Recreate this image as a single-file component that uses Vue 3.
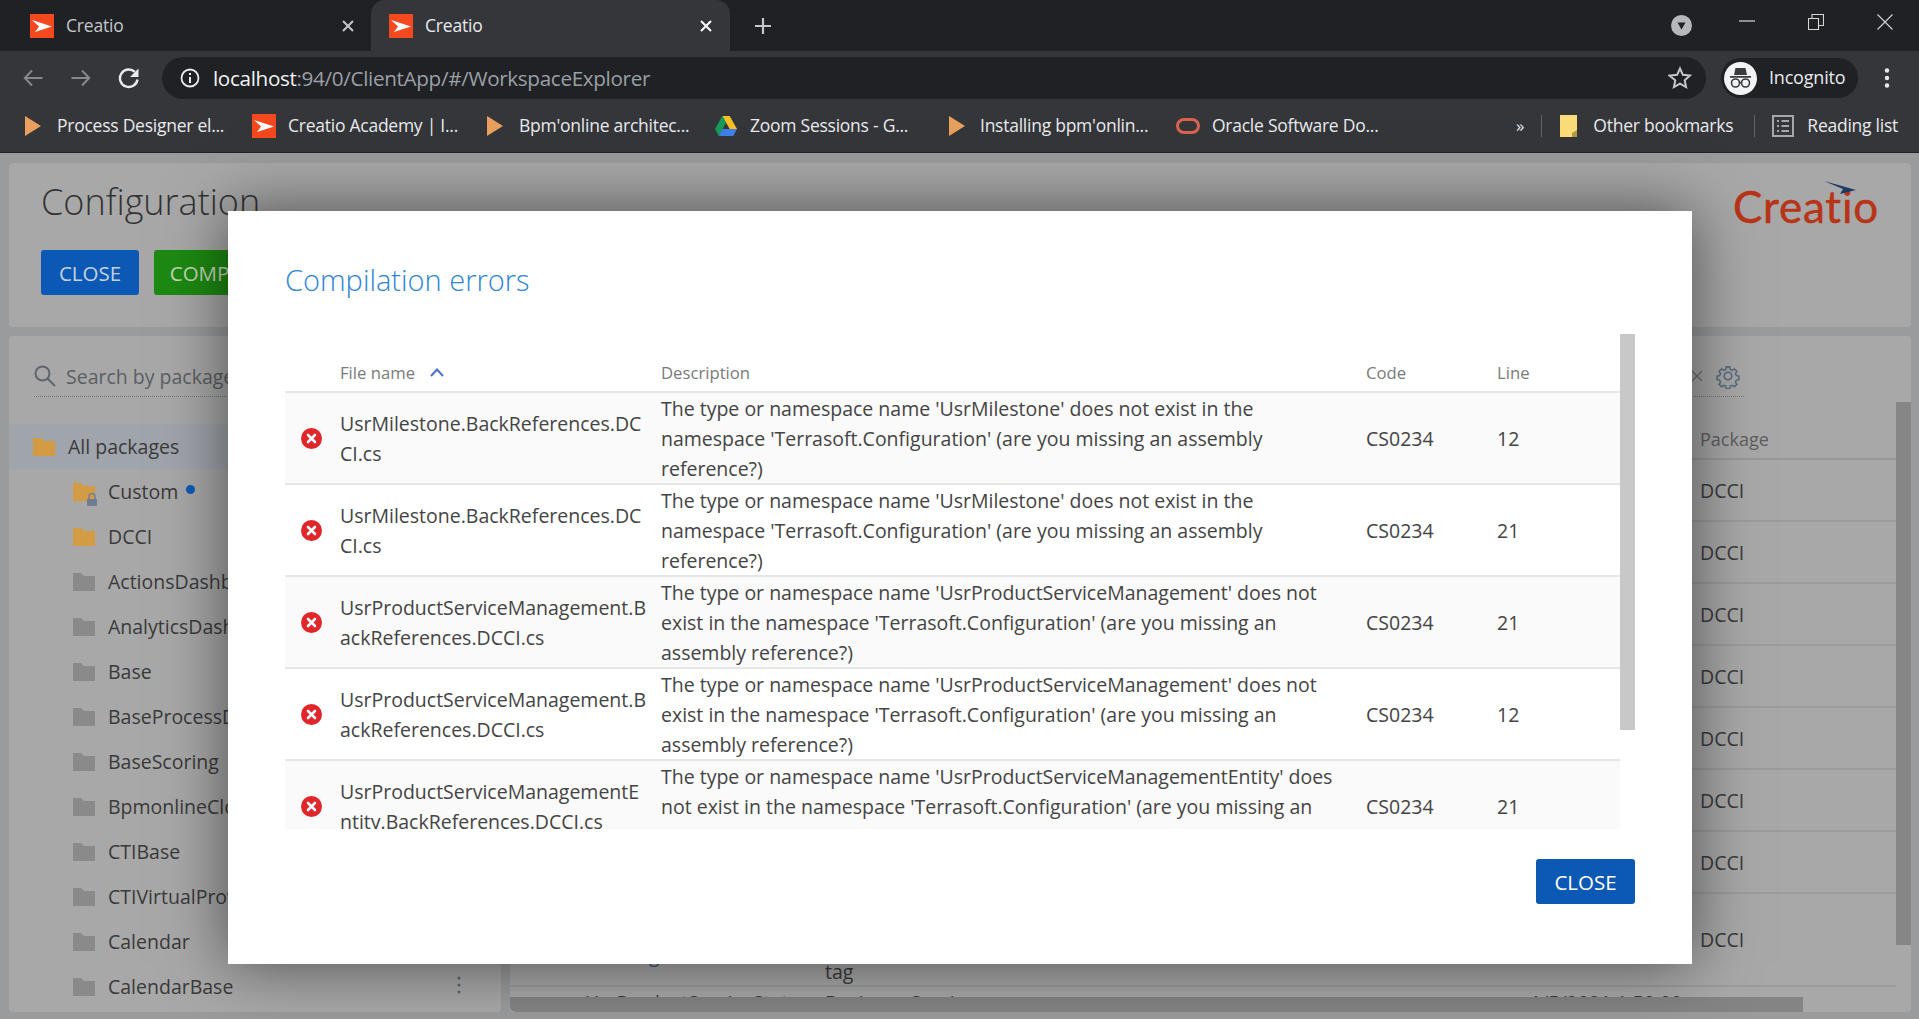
<script setup>
const errors = [
  { file: 'UsrMilestone.BackReferences.DC\nCI.cs', desc: "The type or namespace name 'UsrMilestone' does not exist in the\nnamespace 'Terrasoft.Configuration' (are you missing an assembly\nreference?)", line: 12 },
  { file: 'UsrMilestone.BackReferences.DC\nCI.cs', desc: "The type or namespace name 'UsrMilestone' does not exist in the\nnamespace 'Terrasoft.Configuration' (are you missing an assembly\nreference?)", line: 21 },
  { file: 'UsrProductServiceManagement.B\nackReferences.DCCI.cs', desc: "The type or namespace name 'UsrProductServiceManagement' does not\nexist in the namespace 'Terrasoft.Configuration' (are you missing an\nassembly reference?)", line: 21 },
  { file: 'UsrProductServiceManagement.B\nackReferences.DCCI.cs', desc: "The type or namespace name 'UsrProductServiceManagement' does not\nexist in the namespace 'Terrasoft.Configuration' (are you missing an\nassembly reference?)", line: 12 },
  { file: 'UsrProductServiceManagementE\nntity.BackReferences.DCCI.cs', desc: "The type or namespace name 'UsrProductServiceManagementEntity' does\nnot exist in the namespace 'Terrasoft.Configuration' (are you missing an\nassembly reference?)", line: 21 }
]
const packages = ['ActionsDashboard', 'AnalyticsDashboard', 'Base', 'BaseProcessDesigner', 'BaseScoring', 'BpmonlineCloud', 'CTIBase', 'CTIVirtualProvider', 'Calendar', 'CalendarBase']
const rows = [1, 2, 3, 4, 5, 6, 7]
</script>

<template>
  <div class="screen">
    <header class="chrome">
      <div class="tabstrip">
        <div class="tab first">
          <svg class="fav" viewBox="0 0 24 24"><rect width="24" height="24" fill="#f4481f"/><path d="M2 6l20 6.5L5 18l4-5.500z" fill="#fff"/></svg>
          <span class="tab-title dimmed">Creatio</span>
          <svg class="tab-x" viewBox="0 0 12 12"><path d="M1 1l10 10M11 1L1 11" stroke="#c4c6ca" stroke-width="2"/></svg>
        </div>
        <div class="tab active">
          <svg class="fav" viewBox="0 0 24 24"><rect width="24" height="24" fill="#f4481f"/><path d="M2 6l20 6.5L5 18l4-5.500z" fill="#fff"/></svg>
          <span class="tab-title">Creatio</span>
          <svg class="tab-x" viewBox="0 0 12 12"><path d="M1 1l10 10M11 1L1 11" stroke="#fff" stroke-width="2"/></svg>
        </div>
        <svg class="plus" viewBox="0 0 18 18"><path d="M9 1v16M1 9h16" stroke="#c4c6ca" stroke-width="2.200"/></svg>
        <div class="spacer"></div>
        <svg class="media" viewBox="0 0 21 21"><circle cx="10.500" cy="10.500" r="10.500" fill="#b5b7bb"/><path d="M6.500 7.500h8l-4 7z" fill="#202124"/></svg>
        <svg class="win min" viewBox="0 0 16 16"><path d="M0 8h16" stroke="#d6d6d6" stroke-width="1.200"/></svg>
        <svg class="win res" viewBox="0 0 16 16"><path d="M.5 4.500h10v11H.5zM4 4.500V.5h11.500v11H10.500" fill="none" stroke="#d6d6d6" stroke-width="1.100"/></svg>
        <svg class="win cls" viewBox="0 0 16 16"><path d="M.5.5l15 15M15.500.5l-15 15" stroke="#d6d6d6" stroke-width="1.100"/></svg>
      </div>
      <div class="toolbar">
        <svg class="nav back" viewBox="0 0 20 20"><path d="M19.500 10H2M9 2.500L1.800 10 9 17.500" fill="none" stroke="#85888c" stroke-width="2"/></svg>
        <svg class="nav fwd" viewBox="0 0 20 20"><path d="M.5 10H18M11 2.500l7.200 7.500-7.200 7.500" fill="none" stroke="#85888c" stroke-width="2"/></svg>
        <svg class="nav reload" viewBox="0 0 22 22"><path d="M19.500 12.500a8.800 8.800 0 1 1-2.600-7.600" fill="none" stroke="#e8eaed" stroke-width="2.400"/><path d="M20.500 1.500v8.500H12z" fill="#e8eaed"/></svg>
        <div class="omnibox">
          <svg class="info" viewBox="0 0 20 20"><circle cx="10" cy="10" r="8.500" fill="none" stroke="#e8eaed" stroke-width="1.800"/><path d="M10 9v6M10 5v2" stroke="#e8eaed" stroke-width="2"/></svg>
          <span class="url"><b>localhost</b>:94/0/ClientApp/#/WorkspaceExplorer</span>
          <svg class="star" viewBox="0 0 24 24"><path d="M12 2.500l2.900 6.300 6.900.8-5.100 4.700 1.400 6.800-6.100-3.400-6.100 3.400 1.400-6.800L1.400 9.600l7.700-.8z" fill="none" stroke="#c4c6ca" stroke-width="2"/></svg>
        </div>
        <div class="profile">
          <span class="avatar">
            <svg viewBox="0 0 33 33"><path d="M10 13l1.500-7h10l1.500 7zM6 14h21v1.800H6z" fill="#3a3b3f"/><circle cx="11.500" cy="21" r="4" fill="none" stroke="#3a3b3f" stroke-width="1.600"/><circle cx="21.500" cy="21" r="4" fill="none" stroke="#3a3b3f" stroke-width="1.600"/><path d="M15.500 20.500h2" stroke="#3a3b3f" stroke-width="1.400"/></svg>
          </span>
          <span class="profile-name">Incognito</span>
        </div>
        <svg class="kebab" viewBox="0 0 6 20"><circle cx="3" cy="2.500" r="2.200" fill="#e8eaed"/><circle cx="3" cy="10" r="2.200" fill="#e8eaed"/><circle cx="3" cy="17.500" r="2.200" fill="#e8eaed"/></svg>
      </div>
      <div class="bookmarks">
        <svg class="bm-tri" viewBox="0 0 16 20"><path d="M0 0l16 10L0 20z" fill="#e9a05e"/></svg>
        <span class="bm w167">Process Designer el...</span>
        <svg class="fav bm-fav" viewBox="0 0 24 24"><rect width="24" height="24" fill="#f4481f"/><path d="M2 6l20 6.500L5 18l4-5.500z" fill="#fff"/></svg>
        <span class="bm w168">Creatio Academy | I...</span>
        <svg class="bm-tri third" viewBox="0 0 16 20"><path d="M0 0l16 10L0 20z" fill="#e9a05e"/></svg>
        <span class="bm w170">Bpm'online architec...</span>
        <svg class="drive" viewBox="0 0 22 20"><path d="M7.300 0h7.400L22 13h-7.300z" fill="#f6c026"/><path d="M7.300 0L0 13l3.700 7L11 7z" fill="#169c58"/><path d="M3.700 20H18.300L22 13H7.400z" fill="#3f7fe6"/></svg>
        <span class="bm w162">Zoom Sessions - G...</span>
        <svg class="bm-tri fourth" viewBox="0 0 16 20"><path d="M0 0l16 10L0 20z" fill="#e9a05e"/></svg>
        <span class="bm w172">Installing bpm'onlin...</span>
        <svg class="oracle" viewBox="0 0 24 16"><rect x="1.500" y="1.500" width="21" height="13" rx="6.500" fill="none" stroke="#d9634f" stroke-width="3"/></svg>
        <span class="bm w167">Oracle Software Do...</span>
        <div class="spacer"></div>
        <span class="more">»</span>
        <i class="sep"></i>
        <svg class="bm-folder" viewBox="0 0 17 22"><path d="M0 0h17v22H0z" fill="#fbdc78"/><path d="M17 15v7h-5v-4z" fill="#b59a45"/></svg>
        <span class="bm other">Other bookmarks</span>
        <i class="sep"></i>
        <svg class="reading" viewBox="0 0 22 22"><rect x="1" y="1" width="20" height="20" fill="none" stroke="#a5a7ab" stroke-width="2"/><path d="M5 6h2M5 11h2M5 16h2M9.500 6H17M9.500 11H17M9.500 16H17" stroke="#a5a7ab" stroke-width="2"/></svg>
        <span class="bm">Reading list</span>
      </div>
    </header>

    <main class="page">
      <section class="card head-card">
        <div>
          <h1 class="page-title">Configuration</h1>
          <div class="actions">
            <button class="btn blue">CLOSE</button>
            <button class="btn green">COMPILE</button>
          </div>
        </div>
        <div class="logo">
          <svg class="logo-arrow" viewBox="0 0 33 14"><path d="M0 0l32 9-16 4 3-5z" fill="#1b3a66"/></svg>
          <span>Creatio</span>
        </div>
      </section>

      <div class="panels">
        <aside class="card side">
          <div class="search">
            <svg class="search-ic" viewBox="0 0 22 22"><circle cx="8.500" cy="8.500" r="7" fill="none" stroke="#5d6570" stroke-width="2"/><path d="M13.500 13.500l7.500 7.500" stroke="#5d6570" stroke-width="2"/></svg>
            <span class="search-text">Search by package</span>
          </div>
          <div class="tree-item all">
            <svg class="folder" viewBox="0 0 22 18"><path d="M0 0h8l3 3h11v15H0z" fill="#d49b45"/></svg>
            <span>All packages</span>
          </div>
          <div class="tree-item nested">
            <span class="folder-wrap">
              <svg class="folder" viewBox="0 0 22 18"><path d="M0 0h8l3 3h11v15H0z" fill="#d49b45"/></svg>
              <svg class="lock" viewBox="0 0 10 13"><path d="M2 6V3.500a3 3 0 0 1 6 0V6" fill="none" stroke="#6e7c96" stroke-width="1.500"/><rect y="6" width="10" height="7" rx="1" fill="#6e7c96"/></svg>
            </span>
            <span>Custom</span><i class="dot"></i>
          </div>
          <div class="tree-item nested">
            <svg class="folder" viewBox="0 0 22 18"><path d="M0 0h8l3 3h11v15H0z" fill="#d49b45"/></svg>
            <span>DCCI</span>
          </div>
          <div v-for="p in packages" :key="p" class="tree-item nested">
            <svg class="folder" viewBox="0 0 22 18"><path d="M0 0h8l3 3h11v15H0z" fill="#8a8a8a"/></svg>
            <span>{{ p }}</span>
          </div>
          <svg class="side-dots" viewBox="0 0 4 18"><circle cx="2" cy="2" r="1.600" fill="#5d6a78"/><circle cx="2" cy="9" r="1.600" fill="#5d6a78"/><circle cx="2" cy="16" r="1.600" fill="#5d6a78"/></svg>
        </aside>

        <section class="card content">
          <div class="filter">
            <svg class="filter-x" viewBox="0 0 12 12"><path d="M1 1l10 10M11 1L1 11" stroke="#6b6f75" stroke-width="1.200"/></svg>
            <svg class="gear" viewBox="0 0 24 24"><path d="M10 1.500h4l.6 3 2.300 1 2.600-1.700 2.800 2.800-1.700 2.600 1 2.300 3 .6v4l-3 .6-1 2.300 1.700 2.600-2.800 2.800-2.600-1.700-2.300 1-.6 3h-4l-.6-3-2.300-1-2.600 1.700-2.800-2.800 1.700-2.600-1-2.300-3-.6v-4l3-.6 1-2.300L1.700 6.600l2.800-2.800 2.600 1.700 2.300-1z" transform="translate(2.400 2.400) scale(.8)" fill="none" stroke="#5a6b80" stroke-width="1.800"/><circle cx="12" cy="12" r="3.500" fill="none" stroke="#5a6b80" stroke-width="1.500"/></svg>
          </div>
          <div class="grid-head"><span>Package</span></div>
          <div v-for="r in rows" :key="r" class="grid-row"><span>DCCI</span></div>
          <div class="grid-row tall">
            <span class="link">UsrCaseMilestone<br>UsrTag</span>
            <span class="tag">Related<br>tag</span>
            <span>DCCI</span>
          </div>
          <div class="peek">
            <span class="peek-name">UsrProductServiceStatus</span>
            <span class="peek-type">Business Service</span>
            <span class="peek-date">1/5/2021 1:50:00</span>
          </div>
          <div class="vbar"></div>
          <div class="hbar"></div>
        </section>
      </div>
    </main>

    <div class="modal">
      <h2 class="modal-title">Compilation errors</h2>
      <div class="table-area">
        <div class="table">
          <div class="t-head">
            <span class="c-icon"></span>
            <span class="c-name">File name <svg class="sort" viewBox="0 0 14 9"><path d="M1 8l6-6.500L13 8" fill="none" stroke="#4a73c8" stroke-width="2"/></svg></span>
            <span class="c-desc">Description</span>
            <span class="c-code">Code</span>
            <span class="c-line">Line</span>
          </div>
          <div v-for="(e, i) in errors" :key="i" class="t-row">
            <span class="c-icon">
              <svg class="err" viewBox="0 0 21 21"><circle cx="10.500" cy="10.500" r="10.500" fill="#e0252b"/><path d="M7 7l7 7M14 7l-7 7" stroke="#fff" stroke-width="2.600" stroke-linecap="round"/></svg>
            </span>
            <span class="c-name wrap">{{ e.file }}</span>
            <span class="c-desc wrap">{{ e.desc }}</span>
            <span class="c-code">CS0234</span>
            <span class="c-line">{{ e.line }}</span>
          </div>
        </div>
        <div class="track"><div class="thumb"></div></div>
      </div>
      <div class="modal-foot">
        <button class="btn blue">CLOSE</button>
      </div>
    </div>
  </div>
</template>

<style scoped>
.screen { position: relative; width: 1919px; height: 1019px; overflow: hidden; background: #9a9b9c; font-family: "Open Sans", sans-serif; }
.chrome { height: 153px; background: #35363a; border-bottom: 1px solid #222; box-sizing: border-box; color: #e8eaed; font-family: "Open Sans", sans-serif; }
.spacer { flex: 1; }
.tabstrip { height: 51px; background: #202124; display: flex; align-items: center; }
.tab { height: 51px; display: flex; align-items: center; box-sizing: border-box; }
.tab.first { width: 371px; padding-left: 30px; }
.tab.active { width: 359px; padding-left: 18px; background: #35363a; border-radius: 14px 14px 0 0; }
.fav { width: 24px; height: 24px; flex: none; }
.tab-title { margin-left: 12px; font-size: 17.500px; width: 275px; letter-spacing: -.2px; margin-top: -2px; }
.tab.first .tab-title { width: 276px; }
.tab-title.dimmed { color: #c4c6ca; }
.tab-x { width: 12px; height: 12px; }
.plus { width: 18px; height: 18px; margin-left: 24px; }
.media { width: 21px; height: 21px; margin-right: 47px; }
.win { width: 16px; height: 16px; }
.win.min { margin-right: 53px; margin-top: -10px; }
.win.res { margin-right: 53px; margin-top: -7px; }
.win.cls { margin-right: 26px; margin-top: -7px; }
.toolbar { height: 48px; margin-top: 3px; display: flex; align-items: center; }
.nav { width: 20px; height: 20px; flex: none; }
.back { margin-left: 23px; }
.fwd { margin-left: 28px; }
.nav.reload { margin-left: 27px; width: 22px; height: 22px; }
.omnibox { margin-left: 22px; width: 1544px; height: 42px; background: #202124; border-radius: 21px; display: flex; align-items: center; box-sizing: border-box; padding-left: 18px; flex: none; }
.info { width: 20px; height: 20px; flex: none; }
.url { margin-left: 13px; font-size: 20.700px; color: #9aa0a6; letter-spacing: -.35px; flex: 1; }
.url b { font-weight: 400; color: #f1f3f4; }
.star { width: 24px; height: 24px; margin-right: 14px; }
.profile { margin-left: 15px; width: 137px; height: 40px; border-radius: 20px; background: #202124; display: flex; align-items: center; box-sizing: border-box; padding-left: 3px; flex: none; }
.avatar { width: 33px; height: 33px; border-radius: 50%; background: #f1f3f4; display: block; flex: none; }
.avatar svg { width: 33px; height: 33px; display: block; }
.profile-name { margin-left: 12px; font-size: 18px; letter-spacing: -.2px; margin-top: -2px; }
.kebab { width: 6px; height: 20px; margin-left: 26px; flex: none; }
.bookmarks { height: 48px; display: flex; align-items: center; padding-right: 21px; }
.bookmarks .bm { font-size: 17.500px; white-space: nowrap; letter-spacing: -.25px; color: #e8eaed; margin-top: -2px; }
.w167 { width: 167px; }
.w168 { width: 168px; }
.w170 { width: 170px; }
.w162 { width: 162px; }
.w172 { width: 172px; }
.bm-tri { width: 16px; height: 20px; margin-left: 25px; margin-right: 16px; flex: none; }
.bm-fav { margin-left: 28px; margin-right: 12px; }
.bm-tri.third { margin-left: 31px; }
.drive { width: 22px; height: 20px; margin-left: 26px; margin-right: 13px; flex: none; }
.bm-tri.fourth { margin-left: 37px; margin-right: 15px; }
.oracle { width: 24px; height: 16px; margin-left: 24px; margin-right: 12px; flex: none; }
.more { font-size: 17px; margin-right: 17px; margin-top: -2px; }
.sep { width: 1px; height: 22px; background: #5f6368; display: block; }
.bm-folder { width: 17px; height: 22px; margin-left: 18px; margin-right: 16px; flex: none; }
.other { width: 139px; margin-right: 22px; }
.reading { width: 22px; height: 22px; margin-left: 17px; margin-right: 13px; flex: none; }
.page { padding: 10px 8px 7px 9px; display: flex; flex-direction: column; gap: 9px; height: 866px; box-sizing: border-box; }
.card { background: #a8a8a8; border-radius: 4px; }
.head-card { height: 164px; box-sizing: border-box; padding: 14px 32px 0 32px; display: flex; justify-content: space-between; }
.page-title { margin: 0; font-size: 36px; font-weight: 300; line-height: 50px; color: #333; }
.actions { display: flex; gap: 15px; margin-top: 23px; }
.btn { height: 45px; width: 98px; padding: 0; border: 0; border-radius: 3px; font-family: "Open Sans", sans-serif; font-size: 20.500px; color: #fff; }
.btn.blue { background: #0c58b5; }
.head-card .btn.blue { color: #c5d2e0; }
.btn.green { background: #1d8a12; color: #c8d8b8; width: 119px; }
.logo { position: relative; margin-top: 7px; font-family: Lato, sans-serif; font-size: 44px; line-height: 44px; color: #b83418; letter-spacing: .8px; height: 44px; -webkit-text-stroke: .5px #b83418; }
.logo-arrow { position: absolute; left: 91px; top: -3px; width: 33px; height: 14px; }
.panels { display: flex; gap: 9px; flex: 1; min-height: 0; }
.side { width: 492px; position: relative; overflow: hidden; }
.search { display: flex; align-items: center; height: 61px; box-sizing: border-box; padding-top: 20px; margin-left: 25px; margin-right: 20px; border-bottom: 1px dotted #777; }
.search-ic { width: 22px; height: 22px; margin-right: 10px; flex: none; }
.search-text { font-size: 19.500px; color: #5b5f64; }
.tree-item { height: 45px; display: flex; align-items: center; font-size: 19.500px; color: #3a3a3a; }
.tree-item.all { margin-top: 27px; background: #a0a4ab; padding-left: 24px; }
.tree-item.all .folder { margin-right: 13px; }
.tree-item.nested { padding-left: 64px; }
.tree-item.nested .folder { margin-right: 13px; flex: none; }
.folder { width: 22px; height: 18px; display: block; }
.folder-wrap { position: relative; width: 22px; height: 18px; margin-right: 13px; }
.lock { position: absolute; right: -2px; bottom: -5px; width: 10px; height: 13px; }
.dot { width: 9px; height: 9px; border-radius: 50%; background: #0d5bb5; margin-left: 8px; margin-bottom: 4px; }
.side-dots { position: absolute; left: 448px; top: 640px; width: 4px; height: 18px; }
.content { flex: 1; position: relative; overflow: hidden; }
.filter { height: 61px; box-sizing: border-box; padding-top: 20px; border-bottom: 1px dotted #777; margin-right: 167px; display: flex; justify-content: flex-end; align-items: center; gap: 12px; padding-right: 3px; }
.filter-x { width: 12px; height: 12px; }
.gear { width: 26px; height: 26px; }
.grid-head { height: 63px; box-sizing: border-box; padding-left: 1190px; font-size: 18px; line-height: 84px; color: #5e5e5e; border-bottom: 2px solid #999; margin-right: 15px; }
.grid-row { height: 62px; box-sizing: border-box; padding-left: 1190px; display: flex; align-items: center; font-size: 19.500px; color: #3a3a3a; border-bottom: 2px solid #9b9b9b; margin-right: 15px; position: relative; }
.grid-row.tall { height: 93px; }
.link { position: absolute; left: 86px; top: 16px; color: #41547a; line-height: 30px; }
.tag { position: absolute; left: 315px; top: 33px; line-height: 30px; }
.peek { position: relative; height: 20px; font-size: 19.500px; color: #3a3a3a; }
.peek-name { position: absolute; left: 75px; top: 2px; }
.peek-type { position: absolute; left: 315px; top: 2px; }
.peek-date { position: absolute; left: 1020px; top: 2px; }
.vbar { position: absolute; right: 0; top: 66px; width: 15px; height: 543px; background: #868686; }
.hbar { position: absolute; left: 0; bottom: 0; width: 1293px; height: 15px; background: #848484; border-radius: 0 0 0 6px; }
.modal { position: absolute; left: 228px; top: 211px; width: 1464px; height: 753px; background: #fff; box-sizing: border-box; padding: 0 57px; box-shadow: 0 0 60px rgba(0, 0, 0, .55); display: flex; flex-direction: column; }
.modal-title { margin: 0; height: 123px; box-sizing: border-box; padding-top: 47px; font-size: 29px; font-weight: 300; line-height: 44px; color: #2d84d6; }
.table-area { display: flex; height: 495px; }
.table { width: 1335px; height: 495px; overflow: hidden; }
.t-head, .t-row { display: grid; grid-template-columns: 55px 321px 705px 131px 123px; align-items: center; box-sizing: border-box; }
.t-head { height: 59px; padding-top: 20px; border-bottom: 2px solid #e6e6e6; font-size: 16.700px; color: #7a7a7a; }
.t-row { height: 92px; border-bottom: 2px solid #e6e6e6; font-size: 19.500px; line-height: 30px; color: #444; }
.t-row .wrap, .t-row .c-code, .t-row .c-line { padding-top: 1px; }
.t-row:nth-child(even) { background: #fafafa; }
.wrap { white-space: pre-line; }
.c-icon { display: flex; padding-left: 16px; }
.c-name { white-space: pre-line; }
.sort { width: 14px; height: 9px; margin-left: 11px; margin-bottom: 2px; }
.err { width: 21px; height: 21px; display: block; margin-top: -1px; }
.track { width: 15px; }
.thumb { height: 396px; background: #c8c8c8; }
.modal-foot { display: flex; justify-content: flex-end; margin-top: 30px; }
.modal-foot .btn { width: 99px; }
</style>
